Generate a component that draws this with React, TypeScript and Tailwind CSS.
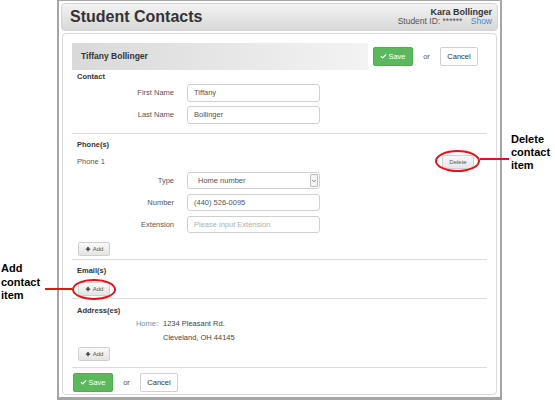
import { Check, ChevronDown, Plus } from "lucide-react"

const labelCls = "w-[102px] text-right text-[7.5px] text-[#555]"

function Field({
  label,
  value,
  placeholder,
  h = "h-[18px]",
}: {
  label: string
  value?: string
  placeholder?: string
  h?: string
}) {
  return (
    <div className={`flex items-center ${h}`}>
      <span className={labelCls}>{label}</span>
      <div className="ml-[13px] w-[133px] h-full border border-[#d0d0d0] rounded-[3px] px-[6px] flex items-center text-[7.5px]">
        {value ? (
          <span className="text-[#555]">{value}</span>
        ) : (
          <span className="text-[#b0b0b0]">{placeholder}</span>
        )}
      </div>
    </div>
  )
}

function AddButton() {
  return (
    <button className="w-[32px] h-[14px] flex items-center justify-center gap-[2px] rounded-[2px] border border-[#cfcfcf] bg-gradient-to-b from-[#fafafa] to-[#e4e4e4] text-[6px] text-[#555]">
      <Plus size={6} strokeWidth={5} className="text-[#333]" />
      Add
    </button>
  )
}

function SaveGroup() {
  return (
    <div className="flex items-center">
      <button className="w-[40px] h-[19px] flex items-center justify-center gap-[1px] rounded-[2px] bg-[#5cb85c] border border-[#4cae4c] text-white text-[7.5px]">
        <Check size={7} strokeWidth={4} />
        Save
      </button>
      <span className="w-[27px] text-center text-[7.5px] text-[#555]">or</span>
      <button className="w-[38px] h-[19px] rounded-[2px] border border-[#d0d0d0] bg-white text-[7.5px] text-[#333]">
        Cancel
      </button>
    </div>
  )
}

function SectionTitle({ children, className = "" }: { children: string; className?: string }) {
  return (
    <div className={`pl-[5px] h-[10px] leading-[10px] text-[7.5px] font-bold text-[#333] ${className}`}>
      {children}
    </div>
  )
}

export default function App() {
  return (
    <div className="relative w-[555px] h-[400px] bg-white overflow-hidden font-['Liberation_Sans',Arial,sans-serif]">
      {/* outer window */}
      <div className="ml-[57px] w-[445px] h-[400px] border-x-2 border-t border-b-[3px] border-[#a5a5a5] px-[2px] pt-[2px] flex flex-col">
        {/* page title bar */}
        <div className="h-[28px] flex items-center justify-between rounded-[4px] border border-[#d4d4d4] bg-gradient-to-b from-[#f3f3f3] to-[#d8d8d8] pl-[8px] pr-[5px]">
          <h1 className="text-[16px] font-bold text-[#333] leading-none">Student Contacts</h1>
          <div className="text-right leading-[9px]">
            <div className="text-[9px] font-bold text-[#333]">Kara Bollinger</div>
            <div className="text-[8.5px] text-[#555]">
              Student ID: ****** <span className="ml-[6px] text-[#428bca]">Show</span>
            </div>
          </div>
        </div>

        {/* contact card */}
        <div className="mt-[2px] mb-[2px] mx-[1px] flex-1 border border-[#dadada] rounded-[4px] px-[9px] pt-[9px]">
          <div className="h-[27px] flex items-center">
            <div className="w-[296px] h-full flex items-center pl-[9px] bg-gradient-to-r from-[#d9d9d9] to-[#f3f3f3] text-[8.5px] font-bold text-[#333]">
              Tiffany Bollinger
            </div>
            <div className="ml-[5px]">
              <SaveGroup />
            </div>
          </div>

          {/* contact */}
          <SectionTitle className="mt-[2px]">Contact</SectionTitle>
          <div className="mt-[2px] flex flex-col gap-[4px]">
            <Field label="First Name" value="Tiffany" />
            <Field label="Last Name" value="Bollinger" />
          </div>
          <div className="mt-[9px] border-t border-[#dcdcdc]" />

          {/* phones */}
          <SectionTitle className="mt-[6px]">Phone(s)</SectionTitle>
          <div className="mt-[5px] h-[14px] flex items-center justify-between pl-[5px] pr-[13px]">
            <span className="text-[7.5px] text-[#555]">Phone 1</span>
            <button className="w-[32px] h-[14px] rounded-[3px] border border-[#cfcfcf] bg-gradient-to-b from-[#fafafa] to-[#e6e6e6] text-[6px] text-[#555]">
              Delete
            </button>
          </div>
          <div className="mt-[3px] flex flex-col gap-[5px]">
            <div className="flex items-center h-[17px]">
              <span className={labelCls}>Type</span>
              <div className="ml-[13px] w-[133px] h-full border border-[#d0d0d0] rounded-[3px] pl-[10px] pr-[1px] flex items-center justify-between text-[7.5px] text-[#555]">
                Home number
                <span className="w-[8px] h-[13px] border border-[#bdbdbd] rounded-[1px] bg-[#f4f4f4] flex items-center justify-center">
                  <ChevronDown size={6} strokeWidth={3} className="text-[#555]" />
                </span>
              </div>
            </div>
            <Field label="Number" value="(440) 526-0095" h="h-[17px]" />
            <Field label="Extension" placeholder="Please input Extension" h="h-[17px]" />
          </div>
          <div className="mt-[9px] pl-[6px]">
            <AddButton />
          </div>
          <div className="mt-[3px] border-t border-[#dcdcdc]" />

          {/* emails */}
          <SectionTitle className="mt-[6px]">Email(s)</SectionTitle>
          <div className="mt-[6px] pl-[6px]">
            <AddButton />
          </div>
          <div className="mt-[2px] border-t border-[#dcdcdc]" />

          {/* addresses */}
          <SectionTitle className="mt-[7px]">Address(es)</SectionTitle>
          <div className="mt-[1px] flex text-[7.5px] leading-[14px]">
            <span className="w-[86px] text-right text-[#6f8fb3]">Home:</span>
            <div className="ml-[5px] text-[#444]">
              <div>1234 Pleasant Rd.</div>
              <div>Cleveland, OH 44145</div>
            </div>
          </div>
          <div className="mt-[2px] pl-[6px]">
            <AddButton />
          </div>
          <div className="mt-[6px] border-t border-[#dcdcdc]" />

          <div className="mt-[5px] pl-[1px]">
            <SaveGroup />
          </div>
        </div>
      </div>

      {/* callouts */}
      <div className="absolute left-[435px] top-[150px] w-[45px] h-[22px] rounded-[50%] border-2 border-[#e3131b]" />
      <div className="absolute left-[480px] top-[158px] w-[29px] h-[2px] bg-[#e3131b]" />
      <div className="absolute left-[511px] top-[133px] text-[11px] leading-[13px] font-bold text-black">
        Delete
        <br />
        contact
        <br />
        item
      </div>

      <div className="absolute left-[72px] top-[279px] w-[44px] h-[21px] rounded-[50%] border-2 border-[#e3131b]" />
      <div className="absolute left-[45px] top-[288px] w-[27px] h-[2px] bg-[#e3131b]" />
      <div className="absolute left-[1px] top-[262px] text-[11px] leading-[13.5px] font-bold text-black">
        Add
        <br />
        contact
        <br />
        item
      </div>
    </div>
  )
}
